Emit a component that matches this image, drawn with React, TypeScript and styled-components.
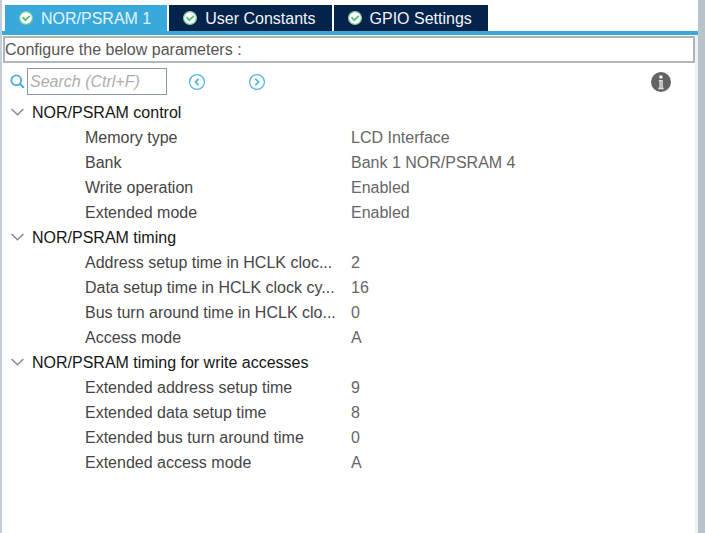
import React, { useState } from "react";
import styled, { createGlobalStyle } from "styled-components";

const GlobalStyle = createGlobalStyle`
  * { box-sizing: border-box; }
  body {
    margin: 0;
    background: #ffffff;
    font-family: "Liberation Sans", Arial, sans-serif;
    font-size: 16px;
    line-height: 25px;
    color: #4c4c4c;
  }
  button, input { font: inherit; color: inherit; margin: 0; }
`;

const Panel = styled.main`
  min-height: 100vh;
  padding-top: 5px;
  border-left: 2px solid #c3ccd8;
  border-right: 7px solid #b8c4ca;
  background: #ffffff;
`;

const TabBar = styled.div`
  display: flex;
  gap: 2px;
  padding-left: 3px;
  border-bottom: 4px solid #39a9dc;
`;

const Tab = styled.button<{ $active: boolean }>`
  display: flex;
  align-items: center;
  gap: 8px;
  height: 26px;
  padding: 0 16px 0 14px;
  border: 0;
  background: ${(p) => (p.$active ? "#39a9dc" : "#03234b")};
  color: ${(p) => (p.$active ? "#e4f4fc" : "#f0f3f7")};
  white-space: nowrap;
`;

const Body = styled.div`
  min-height: calc(100vh - 35px);
  padding: 1px 0 0 1px;
  border-right: 3px solid #eff2f4;
`;

const Notice = styled.p`
  margin: 0;
  height: 27px;
  border: 2px solid #b0b5b9;
  line-height: 23px;
  color: #555555;
`;

const Toolbar = styled.div`
  display: flex;
  align-items: center;
  height: 37px;
  padding: 0 24px 0 7px;
`;

const SearchLabel = styled.label`
  display: flex;
  align-items: center;
  gap: 2px;
  margin-right: 20px;
`;

const SearchInput = styled.input`
  width: 140px;
  height: 27px;
  padding: 0 2px;
  border: 1px solid #8c979f;
  border-radius: 0;
  background: #ffffff;
  &::placeholder {
    color: #adadad;
    font-style: italic;
    opacity: 1;
  }
`;

const IconButton = styled.button`
  display: flex;
  align-items: center;
  justify-content: center;
  width: 20px;
  height: 20px;
  margin-right: 40px;
  padding: 0;
  border: 0;
  background: transparent;
`;

const InfoButton = styled(IconButton)`
  margin: 0 0 0 auto;
`;

const Properties = styled.table`
  width: 100%;
  table-layout: fixed;
  border-collapse: collapse;
`;

const LabelColumn = styled.col`
  width: 348px;
`;

const GroupCell = styled.th`
  height: 25px;
  padding: 0;
  text-align: left;
  font-weight: normal;
`;

const GroupToggle = styled.button`
  display: flex;
  align-items: center;
  gap: 8px;
  height: 25px;
  padding: 0 0 0 8px;
  border: 0;
  background: transparent;
  color: #161616;
`;

const NameCell = styled.th`
  height: 25px;
  padding: 0 0 0 82px;
  text-align: left;
  font-weight: normal;
  white-space: nowrap;
  color: #454545;
`;

const ValueCell = styled.td`
  height: 25px;
  padding: 0;
  color: #666666;
`;

const CheckIcon = () => (
  <svg width="14" height="14" viewBox="0 0 14 14" aria-hidden="true">
    <circle cx="7" cy="7" r="6.4" fill="#ffffff" stroke="#7fcb9b" strokeWidth="1.2" />
    <path d="M3.4 6.2 6.3 9.2 10.8 4.8" fill="none" stroke="#5bbd7e" strokeWidth="1.8" />
  </svg>
);

const SearchIcon = () => (
  <svg width="15" height="15" viewBox="0 0 15 15" fill="none" stroke="#46aede" aria-hidden="true">
    <circle cx="6.3" cy="6.3" r="4.9" strokeWidth="1.8" />
    <path d="M9.8 9.8 13.8 13.8" strokeWidth="2.2" />
  </svg>
);

const CircleArrow = ({ d }: { d: string }) => (
  <svg width="18" height="18" viewBox="0 0 18 18" fill="none" stroke="#52b4e1" aria-hidden="true">
    <circle cx="9" cy="9" r="7.4" strokeWidth="1.3" />
    <path d={d} strokeWidth="1.7" />
  </svg>
);

const InfoIcon = () => (
  <svg width="20" height="20" viewBox="0 0 20 20" aria-hidden="true">
    <circle cx="10" cy="10" r="10" fill="#646464" />
    <circle cx="9.9" cy="5" r="1.8" fill="#f2f2f2" />
    <path d="M7.8 8H11.8V15.8H12.6V17.2H7.4V15.8H8.4V9.2H7.8Z" fill="#e4e4e4" />
    <path d="M10.2 9V16" stroke="#8a8a8a" strokeWidth=".8" />
  </svg>
);

const Chevron = ({ open }: { open: boolean }) => (
  <svg width="13" height="10" viewBox="0 0 13 10" fill="none" stroke="#8a8a8a" strokeWidth="1.5" aria-hidden="true">
    <path d={open ? "M.6 1 6.5 6.8 12.4 1" : "M4 .8 8.5 4.8 4 8.8"} />
  </svg>
);

const tabs = ["NOR/PSRAM 1", "User Constants", "GPIO Settings"];

const groups: { title: string; rows: [string, string][] }[] = [
  {
    title: "NOR/PSRAM control",
    rows: [
      ["Memory type", "LCD Interface"],
      ["Bank", "Bank 1 NOR/PSRAM 4"],
      ["Write operation", "Enabled"],
      ["Extended mode", "Enabled"],
    ],
  },
  {
    title: "NOR/PSRAM timing",
    rows: [
      ["Address setup time in HCLK cloc...", "2"],
      ["Data setup time in HCLK clock cy...", "16"],
      ["Bus turn around time in HCLK clo...", "0"],
      ["Access mode", "A"],
    ],
  },
  {
    title: "NOR/PSRAM timing for write accesses",
    rows: [
      ["Extended address setup time", "9"],
      ["Extended data setup time", "8"],
      ["Extended bus turn around time", "0"],
      ["Extended access mode", "A"],
    ],
  },
];

export default function App() {
  const [active, setActive] = useState(0);
  const [closed, setClosed] = useState<string[]>([]);
  const toggle = (title: string) =>
    setClosed((c) => (c.includes(title) ? c.filter((t) => t !== title) : [...c, title]));

  return (
    <>
      <GlobalStyle />
      <Panel>
        <TabBar role="tablist">
          {tabs.map((name, i) => (
            <Tab key={name} role="tab" aria-selected={i === active} $active={i === active} onClick={() => setActive(i)}>
              <CheckIcon />
              {name}
            </Tab>
          ))}
        </TabBar>
        <Body>
          <Notice>Configure the below parameters :</Notice>
          <Toolbar>
            <SearchLabel>
              <SearchIcon />
              <SearchInput type="text" aria-label="Search" placeholder="Search (Ctrl+F)" />
            </SearchLabel>
            <IconButton aria-label="Previous match">
              <CircleArrow d="M10.6 5.8 7.4 9 10.6 12.2" />
            </IconButton>
            <IconButton aria-label="Next match">
              <CircleArrow d="M7.4 5.8 10.6 9 7.4 12.2" />
            </IconButton>
            <InfoButton aria-label="Information">
              <InfoIcon />
            </InfoButton>
          </Toolbar>
          <Properties>
            <colgroup>
              <LabelColumn />
              <col />
            </colgroup>
            {groups.map(({ title, rows }) => {
              const open = !closed.includes(title);
              return (
                <tbody key={title}>
                  <tr>
                    <GroupCell colSpan={2} scope="rowgroup">
                      <GroupToggle aria-expanded={open} onClick={() => toggle(title)}>
                        <Chevron open={open} />
                        {title}
                      </GroupToggle>
                    </GroupCell>
                  </tr>
                  {open &&
                    rows.map(([name, value]) => (
                      <tr key={name}>
                        <NameCell scope="row">{name}</NameCell>
                        <ValueCell>{value}</ValueCell>
                      </tr>
                    ))}
                </tbody>
              );
            })}
          </Properties>
        </Body>
      </Panel>
    </>
  );
}
